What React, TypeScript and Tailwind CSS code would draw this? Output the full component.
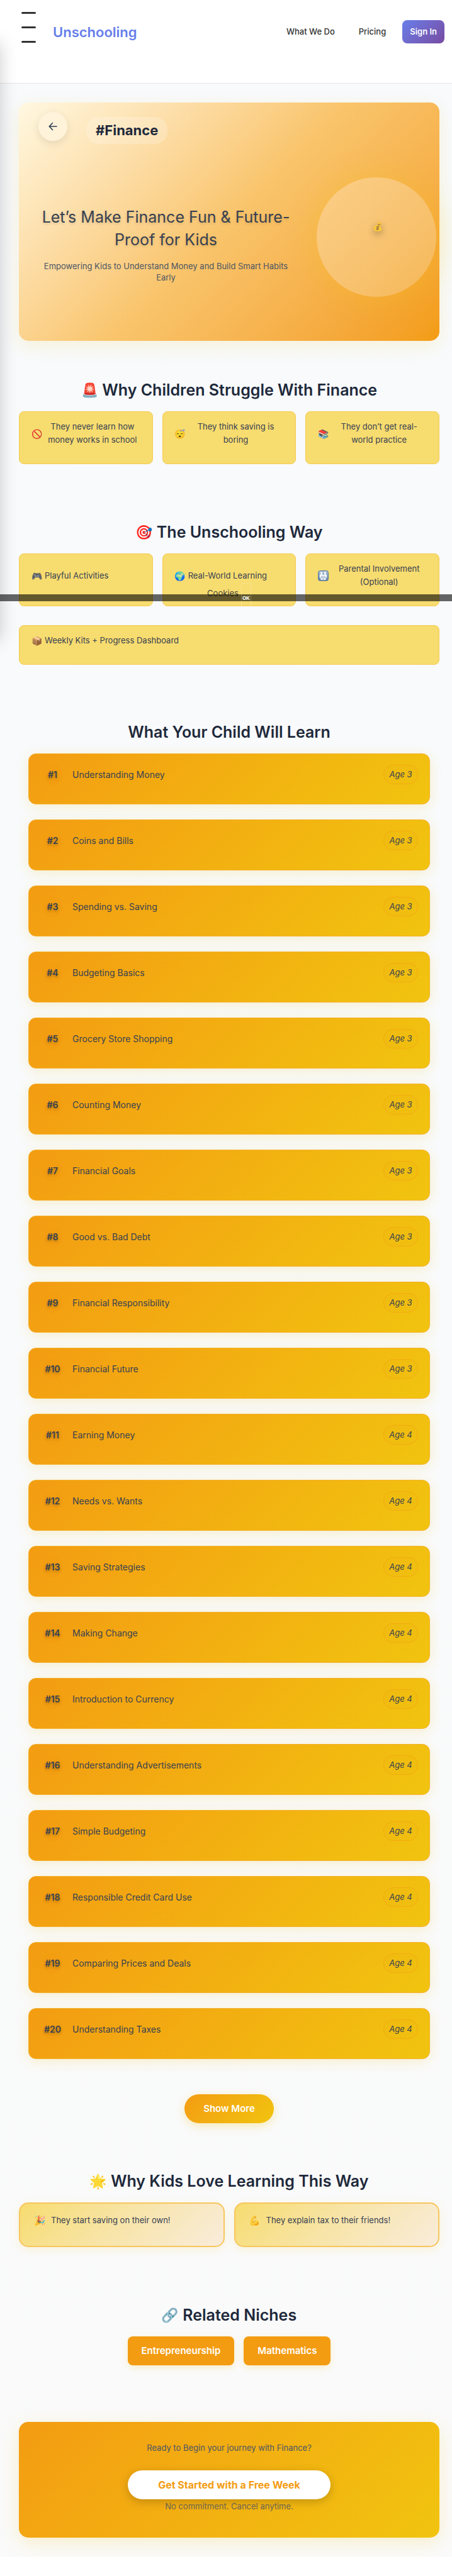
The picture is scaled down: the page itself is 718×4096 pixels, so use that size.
import React from "react";

const struggles = [
  { icon: "🚫", text: "They never learn how money works in school" },
  { icon: "😴", text: "They think saving is boring" },
  { icon: "📚", text: "They don’t get real-world practice" },
];

const methods = [
  { icon: "🎮", text: "Playful Activities" },
  { icon: "🌍", text: "Real-World Learning" },
  { icon: <FamilyIcon />, text: "Parental Involvement (Optional)" },
];

const lessons = [
  "Understanding Money",
  "Coins and Bills",
  "Spending vs. Saving",
  "Budgeting Basics",
  "Grocery Store Shopping",
  "Counting Money",
  "Financial Goals",
  "Good vs. Bad Debt",
  "Financial Responsibility",
  "Financial Future",
  "Earning Money",
  "Needs vs. Wants",
  "Saving Strategies",
  "Making Change",
  "Introduction to Currency",
  "Understanding Advertisements",
  "Simple Budgeting",
  "Responsible Credit Card Use",
  "Comparing Prices and Deals",
  "Understanding Taxes",
];

function FamilyIcon() {
  return (
    <svg width="17" height="17" viewBox="0 0 18 18" role="img" aria-label="Family">
      <defs>
        <linearGradient id="family-bg" x1="0" y1="0" x2="0" y2="1">
          <stop offset="0" stopColor="#a9c0d6" />
          <stop offset="1" stopColor="#5f83a6" />
        </linearGradient>
      </defs>
      <rect x="0.500" y="0.500" width="17" height="17" rx="3.500" fill="url(#family-bg)" stroke="#54779a" />
      <g fill="#fff">
        <circle cx="6" cy="4.200" r="1.900" />
        <circle cx="12" cy="4.200" r="1.900" />
        <path d="M3 8.500c0-1.500 1.200-2.200 3-2.200s3 .7 3 2.200c0-1.500 1.200-2.200 3-2.200s3 .7 3 2.200V12h-1.200v4H4.200v-4H3z" />
      </g>
      <g fill="#fff" stroke="#6688aa" strokeWidth="0.700">
        <path d="M5.200 16.500v-3.200c0-1 .7-1.500 1.700-1.500s1.700.5 1.700 1.500v3.200zM9.400 16.500v-3.200c0-1 .7-1.500 1.700-1.500s1.700.5 1.700 1.500v3.200z" />
        <circle cx="6.900" cy="10.700" r="1.400" />
        <circle cx="11.100" cy="10.700" r="1.400" />
      </g>
    </svg>
  );
}

function SectionTitle({ icon, children }: { icon?: string; children: React.ReactNode }) {
  return (
    <h2 className="flex items-center justify-center gap-[6px] text-[25px] leading-8 font-semibold text-[#1e293b]">
      {icon && <span className="text-[22px] font-normal">{icon}</span>}
      <span>{children}</span>
    </h2>
  );
}

function InfoCard({ icon, text }: { icon: React.ReactNode; text: string }) {
  return (
    <div className="flex items-center gap-1 rounded-lg border border-[#f5cb56] bg-[#f7dc6f] px-[19px] pt-[13px] pb-[27px] text-[13px] leading-[21px] text-[#374151]">
      <span className="w-[17px] shrink-0 text-[14px]">{icon}</span>
      <span className="text-center">{text}</span>
    </div>
  );
}

function Header() {
  return (
    <header className="flex h-[133px] items-start border-b border-[#e2e5ea] bg-white pr-3 pl-[34px]">
      <button aria-label="Open menu" className="mt-[19px] flex w-[23px] flex-col gap-5">
        <span className="h-[3px] rounded-full bg-[#333]" />
        <span className="h-[3px] rounded-full bg-[#333]" />
        <span className="h-[3px] rounded-full bg-[#333]" />
      </button>
      <a href="#" className="mt-[33px] ml-[27px] text-[22px] leading-9 font-semibold text-[#667eea]">
        Unschooling
      </a>
      <nav className="mt-8 ml-auto flex items-center text-[13px] font-medium text-[#333]">
        <a href="#what">What We Do</a>
        <a href="#pricing" className="ml-[38px]">
          Pricing
        </a>
        <button className="ml-[26px] h-[37px] rounded-lg bg-linear-135 from-[#667eea] to-[#764ba2] px-3 font-semibold text-white">
          Sign In
        </button>
      </nav>
    </header>
  );
}

function Hero() {
  return (
    <section className="mt-[29px] h-[379px] rounded-[15px] bg-linear-135 from-[#fff8e1] via-[#f9c46b] to-[#f39c12] shadow-[0_8px_30px_rgba(241,196,15,0.15)]">
      <div className="flex items-start gap-[30px] px-[31px] pt-[15px]">
        <button
          aria-label="Back"
          className="flex h-[46px] w-[46px] items-center justify-center rounded-full bg-[#fff3dc]/90 shadow-[0_4px_14px_rgba(0,0,0,0.1)]"
        >
          <svg width="14" height="14" viewBox="0 0 14 14" fill="none" stroke="#2c3e50" strokeWidth="1.600" strokeLinecap="round" strokeLinejoin="round">
            <path d="M13 7H1.500M6.500 1.500 1.200 7l5.300 5.500" />
          </svg>
        </button>
        <h1 className="mt-2 rounded-[20px] bg-white/20 px-[15px] text-[22px] leading-[43px] font-bold text-[#1e293b]">
          #Finance
        </h1>
      </div>
      <div className="mt-[98px] flex items-start justify-between pl-[30px]">
        <div className="flex-1 text-center">
          <h2 className="text-[25px] leading-9 font-normal text-[#374151] [text-shadow:0_2px_4px_rgba(0,0,0,0.15)]">
            Let’s Make Finance Fun &amp; Future-
            <br />
            Proof for Kids
          </h2>
          <p className="mt-[15px] text-[13px] leading-[18px] text-[#4b5563]">
            Empowering Kids to Understand Money and Build Smart Habits
            <br />
            Early
          </p>
        </div>
        <div className="mt-[-45px] mr-[5px] ml-9 flex h-[190px] w-[190px] items-center justify-center rounded-full bg-linear-135 from-[#fbcf88] via-[#f8c473] to-[#f6b755] shadow-[0_0_50px_rgba(241,196,15,0.3)]">
          <span className="mb-8 ml-1 text-[13px] opacity-80 drop-shadow-[0_4px_6px_rgba(0,0,0,0.45)]">💰</span>
        </div>
      </div>
    </section>
  );
}

function Lesson({ index, title }: { index: number; title: string }) {
  return (
    <li className="flex h-[81px] items-start rounded-xl border border-[#f4b02c] bg-linear-135 from-[#f39c12] to-[#f1c40f] pt-4 pr-[18px] pl-[21px] text-[#374151] shadow-[0_4px_20px_rgba(241,196,15,0.2)]">
      <span className="flex h-[33px] w-[33px] items-center justify-center rounded-full bg-[#f39c12]/40 text-[14px] font-semibold [text-shadow:0_2px_4px_rgba(0,0,0,0.3)]">
        #{index}
      </span>
      <span className="ml-[15px] flex-1 text-[14px] leading-[33px]">{title}</span>
      <span className="mt-px flex h-[31px] w-[55px] items-center justify-center rounded-[15px] border border-[#f3ab12] bg-[#f39c12]/5 text-[13px] italic">
        Age {index <= 10 ? 3 : 4}
      </span>
    </li>
  );
}

function CookieBar() {
  return (
    <div className="absolute inset-x-0 top-[927px]">
      <div className="flex h-[43px] items-start justify-center gap-1 pl-[10px]">
        <span className="mt-[7px] text-[13px] leading-[18px] text-[#4b4b3c]">Cookies</span>
        <button className="relative z-10 h-[43px] w-4 border border-white/20 text-center text-[8px] leading-[46px] font-bold text-white">
          OK
        </button>
      </div>
      <div className="absolute inset-x-0 top-[18px] h-[11px] bg-black/60" />
    </div>
  );
}

export default function App() {
  return (
    <div className="relative overflow-hidden bg-white pb-[30px] font-['Inter','Noto_Color_Emoji',sans-serif]">
      <Header />
      <main className="bg-linear-to-b from-[#f8fafc] to-[#fafafa] pt-px pr-5 pb-[30px] pl-[30px]">
        <Hero />

        <section className="mt-[62px]">
          <SectionTitle icon="🚨">Why Children Struggle With Finance</SectionTitle>
          <div className="mt-[18px] grid grid-cols-3 gap-[15px]">
            {struggles.map((s) => (
              <InfoCard key={s.text} {...s} />
            ))}
          </div>
        </section>

        <section className="mt-[92px]">
          <SectionTitle icon="🎯">The Unschooling Way</SectionTitle>
          <div className="mt-[18px] grid grid-cols-3 gap-[15px]">
            {methods.map((m) => (
              <InfoCard key={m.text} {...m} />
            ))}
          </div>
          <div className="mt-[30px]">
            <InfoCard icon="📦" text="Weekly Kits + Progress Dashboard" />
          </div>
        </section>

        <section className="mt-[91px] px-[15px]">
          <SectionTitle>What Your Child Will Learn</SectionTitle>
          <ul className="mt-[18px] flex flex-col gap-6">
            {lessons.map((title, i) => (
              <Lesson key={title} index={i + 1} title={title} />
            ))}
          </ul>
          <div className="mt-[56px] flex justify-center">
            <button className="h-[46px] w-[142px] rounded-full bg-linear-135 from-[#f39c12] to-[#f1c40f] text-[15px] font-semibold text-white shadow-[0_4px_15px_rgba(241,196,15,0.3)]">
              Show More
            </button>
          </div>
        </section>

        <section className="mt-[76px]">
          <SectionTitle icon="🌟">Why Kids Love Learning This Way</SectionTitle>
          <div className="mt-[18px] grid grid-cols-2 gap-[15px] text-[13px] leading-[21px] text-[#374151]">
            {[
              ["🎉", "They start saving on their own!"],
              ["💪", "They explain tax to their friends!"],
            ].map(([icon, text]) => (
              <div
                key={text}
                className="flex h-[71px] items-start gap-2 rounded-[15px] border-2 border-[#f6c65e] bg-linear-135 from-[#f7dc6f] to-[#f9ecdb] px-[22px] pt-4 shadow-[0_4px_15px_rgba(241,196,15,0.15)]"
              >
                <span className="w-[19px] text-[15px] opacity-80">{icon}</span>
                <span>{text}</span>
              </div>
            ))}
          </div>
        </section>

        <section className="mt-[92px]">
          <SectionTitle icon="🔗">Related Niches</SectionTitle>
          <div className="mt-[18px] flex justify-center gap-[15px]">
            {["Entrepreneurship", "Mathematics"].map((name) => (
              <a
                key={name}
                href={"#" + name.toLowerCase()}
                className="rounded-lg bg-[#f39c12] px-[22px] text-[15px] leading-[46px] font-semibold text-white shadow-[0_4px_12px_rgba(241,196,15,0.2)]"
              >
                {name}
              </a>
            ))}
          </div>
        </section>

        <section className="mt-[90px] flex h-[184px] flex-col items-center rounded-[15px] bg-linear-135 from-[#f39c12] to-[#f1c40f] pt-8 shadow-[0_8px_30px_rgba(241,196,15,0.2)]">
          <p className="text-[13px] leading-[18px] text-[#4b5563]">Ready to Begin your journey with Finance?</p>
          <button className="mt-[27px] h-[46px] rounded-full bg-white px-12 text-[16px] font-bold text-[#f39c12] shadow-[0_4px_15px_rgba(0,0,0,0.2)]">
            Get Started with a Free Week
          </button>
          <p className="mt-[2px] text-[13px] leading-[18px] text-[#6b6450]">No commitment. Cancel anytime.</p>
        </section>
      </main>

      <div className="absolute top-[68px] -left-10 h-[950px] w-10 shadow-[0_0_28px_rgba(0,0,0,0.2)]" />
      <CookieBar />
    </div>
  );
}
